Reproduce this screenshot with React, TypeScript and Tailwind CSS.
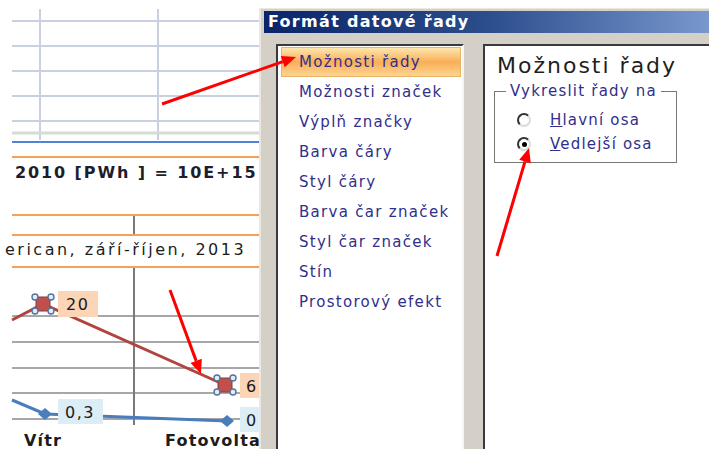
import React from 'react';

const listItems = [
  'Možnosti řady',
  'Možnosti značek',
  'Výplň značky',
  'Barva čáry',
  'Styl čáry',
  'Barva čar značek',
  'Styl čar značek',
  'Stín',
  'Prostorový efekt',
];

function Arrow({ x1, y1, x2, y2 }: { x1: number; y1: number; x2: number; y2: number }) {
  const a = Math.atan2(y2 - y1, x2 - x1);
  const len = 14;
  const half = 6;
  const bx = x2 - len * Math.cos(a);
  const by = y2 - len * Math.sin(a);
  const px = -Math.sin(a) * half;
  const py = Math.cos(a) * half;
  const head = `${x2},${y2} ${bx + px},${by + py} ${bx - px},${by - py}`;
  return (
    <g>
      <line x1={x1} y1={y1} x2={bx} y2={by} stroke="#ff0000" strokeWidth="3" />
      <polygon points={head} fill="#ff0000" />
    </g>
  );
}

function SheetGrid() {
  const rows = [21, 46, 71, 96, 121];
  return (
    <svg width="259" height="145" className="block shrink-0">
      {rows.map((y) => (
        <line key={y} x1="12" x2="259" y1={y} y2={y} stroke="#c8d0e2" strokeWidth="2" />
      ))}
      <line x1="40" x2="40" y1="9" y2="140" stroke="#c8d0e2" strokeWidth="2" />
      <line x1="158" x2="158" y1="9" y2="140" stroke="#c8d0e2" strokeWidth="2" />
      <line x1="12" x2="259" y1="133" y2="133" stroke="#d3ddd3" strokeWidth="3" />
      <line x1="12" x2="259" y1="142" y2="142" stroke="#4d84d4" strokeWidth="2" />
    </svg>
  );
}

function Handles({ cx, cy }: { cx: number; cy: number }) {
  const pts = [
    [cx - 8, cy - 7],
    [cx + 8, cy - 7],
    [cx - 8, cy + 7],
    [cx + 8, cy + 7],
  ];
  return (
    <g>
      <rect x={cx - 7} y={cy - 7} width="14" height="14" fill="#c0504d" stroke="#8d3a37" strokeWidth="1" />
      {pts.map(([x, y], i) => (
        <circle key={i} cx={x} cy={y} r="3" fill="#e4ecf7" stroke="#557399" strokeWidth="1.4" />
      ))}
    </g>
  );
}

function Diamond({ cx, cy }: { cx: number; cy: number }) {
  return <polygon points={`${cx},${cy - 6} ${cx + 7},${cy} ${cx},${cy + 6} ${cx - 7},${cy}`} fill="#4a7ebb" />;
}

// plot area under the chart titles, y is local to its top
function Plot() {
  const grid = [48, 74, 100, 125, 151];
  return (
    <svg width="259" height="181" className="block shrink-0 font-['DejaVu_Sans',sans-serif]">
      {grid.map((y) => (
        <line key={y} x1="12" x2="259" y1={y} y2={y} stroke="#8a8a8a" strokeWidth="1.5" />
      ))}
      <line x1="134" x2="134" y1="0" y2="157" stroke="#7a7a7a" strokeWidth="2" />
      <polyline points="12,52 43,36 225,117" fill="none" stroke="#b2443f" strokeWidth="3" />
      <polyline points="12,132 45,146 227,153" fill="none" stroke="#4a7dbb" strokeWidth="3" />
      <Diamond cx={45} cy={146} />
      <Diamond cx={227} cy={153} />
      <Handles cx={43} cy={36} />
      <Handles cx={225} cy={117} />

      <rect x="58" y="23" width="40" height="26" fill="#fbd5b6" />
      <text x="66" y="42" fontSize="16" letterSpacing="1.5" fill="#1a1a1a">20</text>
      <rect x="240" y="105" width="30" height="25" fill="#fbd5b6" />
      <text x="246" y="124" fontSize="16" fill="#1a1a1a">6</text>
      <rect x="58" y="131" width="45" height="25" fill="#dcedf5" />
      <text x="65" y="150" fontSize="16" letterSpacing="1.5" fill="#1a1a1a">0,3</text>
      <rect x="240" y="139" width="30" height="25" fill="#dcedf5" />
      <text x="246" y="158" fontSize="16" fill="#1a1a1a">0</text>

      <text x="24" y="178" fontSize="16" fontWeight="bold" letterSpacing="1.2" fill="#1c1c1c">Vítr</text>
      <text x="165" y="178" fontSize="16" fontWeight="bold" letterSpacing="1.2" fill="#1c1c1c">Fotovolta</text>
    </svg>
  );
}

function Radio({ checked }: { checked?: boolean }) {
  return (
    <span className="w-[14px] h-[14px] shrink-0 rounded-full bg-white border-2 border-t-[#333333] border-l-[#333333] border-r-[#dedcd6] border-b-[#dedcd6] flex items-center justify-center">
      {checked && <span className="w-[5px] h-[5px] rounded-full bg-black" />}
    </span>
  );
}

export default function App() {
  return (
    <div className="relative w-[709px] h-[449px] overflow-hidden bg-white flex font-['DejaVu_Sans',Verdana,sans-serif]">
      {/* worksheet with the chart */}
      <div className="w-[259px] shrink-0 flex flex-col overflow-hidden">
        <SheetGrid />
        <div className="h-[11px] shrink-0" />
        <div className="ml-[12px] h-[58px] shrink-0 border-t-2 border-[#f7a057] pl-[3px] pt-[5px]">
          <div className="text-[16px] leading-[20px] font-bold tracking-[1.9px] text-[#1d1d2b] whitespace-nowrap">
            2010 [PWh ] = 10E+15
          </div>
        </div>
        <div className="ml-[12px] h-[20px] shrink-0 border-t-2 border-[#f7a057] flex">
          <div className="w-[123px] border-r-2 border-[#7a7a7a]" />
        </div>
        <div className="ml-[12px] h-[34px] shrink-0 border-t-2 border-b-2 border-[#f7a057] pt-[4px]">
          <div className="-ml-[7px] text-[16px] leading-[20px] tracking-[2.5px] text-[#1d1d1d] whitespace-nowrap">
            erican, září-říjen, 2013
          </div>
        </div>
        <Plot />
      </div>

      {/* Format data series dialog */}
      <div className="w-[450px] shrink-0 mt-[8px] flex flex-col bg-[#d4d0c8] border-l-2 border-t border-[#ebe8e2] pl-[3px] pt-[2px]">
        <div className="h-[22px] shrink-0 flex items-center pl-[4px] bg-gradient-to-r from-[#0a246a] via-[#2c4d8c] to-[#7898cd]">
          <span className="text-white font-bold text-[16px] tracking-[1.3px] whitespace-nowrap">Formát datové řady</span>
        </div>
        <div className="flex-1 flex gap-[19px] pl-[12px] pt-[11px]">
          <div className="w-[188px] shrink-0 bg-white border-l-2 border-t-2 border-r-2 border-l-[#3a3a3a] border-t-[#3a3a3a] border-r-[#f6f5f1] pt-[1px]">
            {listItems.map((item, i) => (
              <div
                key={item}
                className={`ml-[3px] mr-[1px] h-[30px] flex items-center pl-[17px] border ${
                  i === 0
                    ? 'border-[#e8b46a] bg-gradient-to-b from-[#fde6ad] via-[#f9ae55] to-[#fdd590]'
                    : 'border-transparent'
                }`}
              >
                <span className="text-[15px] tracking-[1.3px] text-[#30308a] whitespace-nowrap">{item}</span>
              </div>
            ))}
          </div>
          <div className="flex-1 bg-white border-l-2 border-t-2 border-[#3a3a3a] pl-[9px] pt-[7px]">
            <div className="pl-[3px] text-[22px] leading-[26px] tracking-[2px] text-[#1f1f1f] whitespace-nowrap">
              Možnosti řady
            </div>
            <fieldset className="mt-[2px] w-[183px] border border-[#777777] pb-[6px]">
              <legend className="ml-[11px] px-[4px] text-[15px] leading-[20px] tracking-[1.2px] text-[#30308a] whitespace-nowrap">
                Vykreslit řady na
              </legend>
              <div className="pl-[22px] pt-[7px] flex flex-col">
                <label className="h-[24px] flex items-center gap-[19px]">
                  <Radio />
                  <span className="text-[15px] tracking-[1.2px] text-[#30308a]">
                    <span className="underline">H</span>lavní osa
                  </span>
                </label>
                <label className="h-[24px] flex items-center gap-[19px]">
                  <Radio checked />
                  <span className="text-[15px] tracking-[1.2px] text-[#30308a]">
                    <span className="underline">V</span>edlejší osa
                  </span>
                </label>
              </div>
            </fieldset>
          </div>
        </div>
      </div>

      {/* red callout arrows */}
      <svg width="709" height="449" className="absolute inset-0 pointer-events-none">
        <Arrow x1={162} y1={104} x2={296} y2={57} />
        <Arrow x1={170} y1={290} x2={201} y2={374} />
        <Arrow x1={497} y1={256} x2={529} y2={148} />
      </svg>
    </div>
  );
}
